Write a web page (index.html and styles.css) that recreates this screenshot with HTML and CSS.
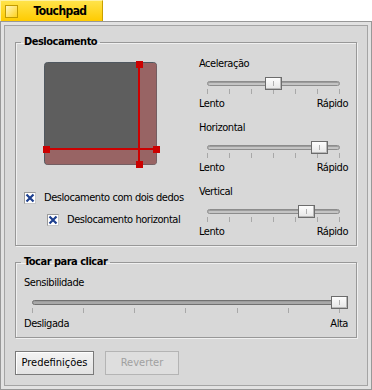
FILE: index.html
```html
<!DOCTYPE html>
<html lang="pt">
<head>
<meta charset="utf-8">
<title>Touchpad</title>
<link rel="stylesheet" href="styles.css">
</head>
<body>
<div class="tab">
  <span class="zoom"></span>
  <span class="title">Touchpad</span>
</div>
<div class="win">
  <div class="panel">
    <fieldset class="box">
      <legend>Deslocamento</legend>
      <div class="cols">
        <div class="left">
          <svg class="pad" width="117" height="107" viewBox="0 0 117 107">
            <rect x="1.5" y="1.5" width="112" height="102" rx="3" fill="#5e5e5e" stroke="#505860"/>
            <path d="M96 2h15a2.5 2.5 0 0 1 2.5 2.5V101a2.5 2.5 0 0 1-2.5 2.5H5A3 3 0 0 1 2 101V88h94z" fill="#986464"/>
            <path d="M96 3v101M3 88h111" stroke="#cc0000" stroke-width="2"/>
            <rect x="93" y="0" width="7" height="7" fill="#cc0000"/>
            <rect x="93" y="100" width="7" height="7" fill="#cc0000"/>
            <rect x="0" y="85" width="7" height="7" fill="#cc0000"/>
            <rect x="110" y="85" width="7" height="7" fill="#cc0000"/>
          </svg>
          <label class="check">
            <span class="cb"><svg viewBox="0 0 10 10"><path d="M1.5 1.5l7 7M8.5 1.5l-7 7"/></svg></span>
            Deslocamento com dois dedos
          </label>
          <label class="check sub">
            <span class="cb"><svg viewBox="0 0 10 10"><path d="M1.5 1.5l7 7M8.5 1.5l-7 7"/></svg></span>
            Deslocamento horizontal
          </label>
        </div>
        <div class="right">
          <div class="slider">
            <div class="name">Aceleração</div>
            <div class="rail" style="--v:.5">
              <div class="track"></div>
              <div class="ticks"><i></i><i></i><i></i><i></i><i></i><i></i><i></i></div>
              <div class="thumb"></div>
            </div>
            <div class="ends"><span>Lento</span><span>Rápido</span></div>
          </div>
          <div class="slider">
            <div class="name">Horizontal</div>
            <div class="rail" style="--v:.897">
              <div class="track"></div>
              <div class="ticks"><i></i><i></i><i></i><i></i><i></i><i></i><i></i></div>
              <div class="thumb"></div>
            </div>
            <div class="ends"><span>Lento</span><span>Rápido</span></div>
          </div>
          <div class="slider">
            <div class="name">Vertical</div>
            <div class="rail" style="--v:.784">
              <div class="track"></div>
              <div class="ticks"><i></i><i></i><i></i><i></i><i></i><i></i><i></i></div>
              <div class="thumb"></div>
            </div>
            <div class="ends"><span>Lento</span><span>Rápido</span></div>
          </div>
        </div>
      </div>
    </fieldset>

    <fieldset class="box tap">
      <legend>Tocar para clicar</legend>
      <div class="slider wide">
        <div class="name">Sensibilidade</div>
        <div class="rail" style="--v:1">
          <div class="track"></div>
          <div class="ticks"><i></i><i></i><i></i><i></i><i></i><i></i><i></i></div>
          <div class="thumb"></div>
        </div>
        <div class="ends"><span>Desligada</span><span>Alta</span></div>
      </div>
    </fieldset>

    <div class="buttons">
      <button>Predefinições</button>
      <button disabled>Reverter</button>
    </div>
  </div>
</div>
</body>
</html>
```

FILE: styles.css
```css
*{box-sizing:border-box;}
html,body{margin:0;background:#fff;}
body{ width:372px; height:390px; overflow:hidden; color:#000; font-family:"DejaVu Sans Condensed","DejaVu Sans",sans-serif; font-stretch:condensed; font-size:11px; line-height:14px; letter-spacing:-.45px; }

/* window tab */
.tab{ width:103px; height:21px; display:flex; align-items:center; padding-left:4px; background:linear-gradient(#ffe34a,#ffcb00); border:1px solid #c9a000; border-bottom:none; border-top-color:#fff2a0; border-left-color:#fff2a0; }
.tab .zoom{ width:13px; height:13px; flex:none; border:1px solid #c29b00; background:linear-gradient(135deg,#fff6c0,#ffd21c); }
.tab .title{ flex:1; text-align:center; font-weight:bold; font-size:12px; letter-spacing:-.6px; }

/* window frame */
.win{ height:369px; background:#e2e2e2; border:1px solid #989898; padding:3px; }
.panel{ height:100%; background:#d8d8d8; border:1px solid #a4a4a4; padding:9px 10px 0; }

.box{ margin:0; padding:0 8px 6px; border:1px solid #989898; box-shadow:1px 1px 0 #f0f0f0, inset 1px 1px 0 #f0f0f0; }
.box legend{ font-weight:bold; padding:0 3px; margin-left:-3px; line-height:14px; letter-spacing:-.5px; }
.box.tap{ margin-top:9px; padding-top:7px; padding-bottom:6px; }

.cols{ display:flex; }
.left{ width:175px; flex:none; }
.right{ flex:1; padding-top:8px; display:flex; flex-direction:column; gap:10px; }

.pad{ display:block; margin:12px 0 0 19px; }

.check{ display:flex; align-items:center; gap:8px; height:14px; white-space:nowrap; }
.check:first-of-type{ margin-top:23px; }
.check.sub{ margin-top:8px; padding-left:23px; }
.cb{ width:12px; height:12px; flex:none; background:#fff; border:1px solid #9a9a9a; border-right-color:#c8c8c8; border-bottom-color:#c8c8c8; }
.cb svg{ display:block; width:10px; height:10px; fill:none; stroke:#1d3f8f; stroke-width:2.2; }

/* sliders */
.rail{ position:relative; height:26px; margin:0 8px; padding-top:10px; }
.track{ height:5px; border:1px solid #8c8c8c; border-radius:3px; background:#c4c4c4; box-shadow:inset 0 1px 0 #9c9c9c; }
.ticks{ display:flex; justify-content:space-between; margin-top:3px; height:5px; }
.ticks i{ width:1px; background:#a8a8a8; }
.thumb{ position:absolute; top:6px; left:calc((100% - 17px) * var(--v)); width:17px; height:13px; background:linear-gradient(#fdfdfd,#e6e6e6); border:1px solid #6c6c6c; box-shadow:inset -1px -1px 0 #b8b8b8; }
.thumb::after{ content:""; position:absolute; left:7px; top:3px; width:1px; height:5px; background:#b0b0b0; }
.ends{ display:flex; justify-content:space-between; }

.wide .rail{ margin:0 0 1px 8px; }
.wide .ticks{ padding-right:8px; }
.wide .track{ background:#a8a8a8; border-color:#707070; }

.buttons{ display:flex; gap:11px; margin-top:13px; }
.buttons button{ width:79px; height:24px; font:inherit; color:#000; background:linear-gradient(#f4f4f4,#e2e2e2); border:1px solid #7a7a7a; box-shadow:inset 1px 1px 0 #fff; padding:0; }
.buttons button:disabled{ width:74px; color:#a0a0a0; background:#dedede; border-color:#b4b4b4; box-shadow:none; }
```
